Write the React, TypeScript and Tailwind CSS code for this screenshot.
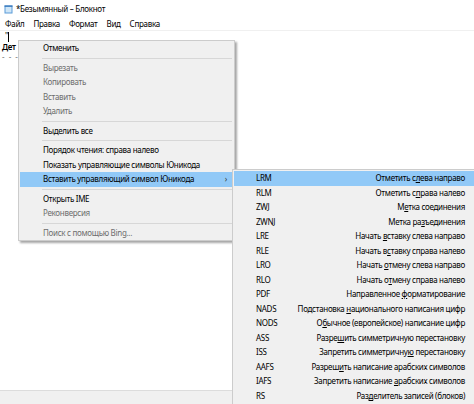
import React from "react"

const font = { fontFamily: '"Noto Sans", "Open Sans", sans-serif' }

type Item = { label?: string; disabled?: boolean; active?: boolean; arrow?: boolean; sep?: boolean }

const mainItems: Item[] = [
  { label: "Отменить" },
  { sep: true },
  { label: "Вырезать", disabled: true },
  { label: "Копировать", disabled: true },
  { label: "Вставить", disabled: true },
  { label: "Удалить", disabled: true },
  { sep: true },
  { label: "Выделить все" },
  { sep: true },
  { label: "Порядок чтения: справа налево" },
  { label: "Показать управляющие символы Юникода" },
  { label: "Вставить управляющий символ Юникода", active: true, arrow: true },
  { sep: true },
  { label: "Открыть IME" },
  { label: "Реконверсия", disabled: true },
  { sep: true },
  { label: "Поиск с помощью Bing...", disabled: true },
]

// [code, before, underlined, after]
const subItems: [string, string, string, string][] = [
  ["LRM", "Отметить с", "л", "ева направо"],
  ["RLM", "Отметить с", "п", "рава налево"],
  ["ZWJ", "М", "е", "тка соединения"],
  ["ZWNJ", "Метка ра", "з", "ъединения"],
  ["LRE", "Начать ", "в", "ставку слева направо"],
  ["RLE", "Начать в", "с", "тавку справа налево"],
  ["LRO", "Начать ", "о", "тмену слева направо"],
  ["RLO", "Начать о", "т", "мену справа налево"],
  ["PDF", "Направленное ", "ф", "орматирование"],
  ["NADS", "Подстановка ", "н", "ационального написания цифр"],
  ["NODS", "О", "б", "ычное (европейское) написание цифр"],
  ["ASS", "Разре", "ш", "ить симметричную перестановку"],
  ["ISS", "Запретить симметричну", "ю", " перестановку"],
  ["AAFS", "Разреш", "и", "ть написание арабских символов"],
  ["IAFS", "Запретить написание ", "а", "рабских символов"],
  ["RS", "Раз", "д", "елитель записей (блоков)"],
]

function NotepadIcon() {
  return (
    <svg width="9" height="9" viewBox="0 0 9 9">
      <rect x="0.5" y="0.5" width="8" height="8" fill="#5a9bd8" />
      <rect x="1.5" y="1.5" width="6" height="6" fill="#cfe6f7" />
      <rect x="0.5" y="0.5" width="8" height="1.2" fill="#2c6eb5" />
    </svg>
  )
}

export default function App() {
  return (
    <div className="relative w-[474px] h-[404px] overflow-hidden bg-white text-black tracking-[-0.3px]" style={font}>
      <div className="flex flex-col h-full">
        {/* Title bar */}
        <div className="h-[18px] flex items-center gap-[3px] pl-[4px] text-[8px]">
          <NotepadIcon />
          <span>*Безымянный – Блокнот</span>
        </div>

        {/* Menu bar */}
        <div className="h-[13px] flex items-center pl-[5px] gap-[9px] text-[8px] border-b border-[#f0f0f0]">
          <span>Файл</span>
          <span>Правка</span>
          <span>Формат</span>
          <span>Вид</span>
          <span>Справка</span>
        </div>

        {/* Edit area */}
        <div className="flex-1 pl-[2px] text-[8px]">
          <div className="flex items-start h-[11px] pt-[1px]">
            <span className="text-[8px] leading-[8px] pl-[3px]">"</span>
            <span className="w-px h-[10px] bg-black" />
          </div>
          <div className="font-semibold h-[10px] leading-[10px]">Дет</div>
          <div className="text-[#777] h-[6px] mt-[2px] leading-[6px] tracking-[1px]">- - -</div>
        </div>

        {/* Status bar */}
        <div className="h-[14px] bg-[#f0f0f0] border-t border-[#dcdcdc]" />
      </div>

      {/* Context menu */}
      <div className="absolute left-[18px] top-[40px] w-[217px] bg-[#f0f0f0] border border-[#cccccc] px-[1px] shadow-[2px_2px_2px_rgba(0,0,0,0.35)] text-[8px]">
        {mainItems.map((it, i) =>
          it.sep ? (
            <div key={i} className="h-[5px] flex items-center pl-[22px] pr-[1px]">
              <div className="h-px w-full bg-[#d7d7d7]" />
            </div>
          ) : (
            <div
              key={i}
              className={`h-[14.5px] flex items-center pl-[23px] pr-[6px] ${
                it.active ? "bg-[#91c9f7]" : ""
              } ${it.disabled ? "text-[#6d6d6d]" : "text-black"}`}
            >
              <span className="flex-1 whitespace-nowrap">{it.label}</span>
              {it.arrow && <span className="text-[8px] text-[#333]">›</span>}
            </div>
          )
        )}
      </div>

      {/* Submenu */}
      <div className="absolute left-[232px] top-[169px] w-[246px] bg-[#f0f0f0] border border-[#cccccc] py-[1px] px-[1px] text-[8px]">
        {subItems.map(([code, a, u, b], i) => (
          <div
            key={code}
            className={`h-[14.5px] flex items-center pl-[22px] pr-[11px] ${i === 0 ? "bg-[#91c9f7]" : ""}`}
          >
            <span className="w-[40px] whitespace-nowrap">{code}</span>
            <span className="flex-1 text-right whitespace-nowrap">
              {a}
              <span className="underline underline-offset-1">{u}</span>
              {b}
            </span>
          </div>
        ))}
      </div>
    </div>
  )
}
